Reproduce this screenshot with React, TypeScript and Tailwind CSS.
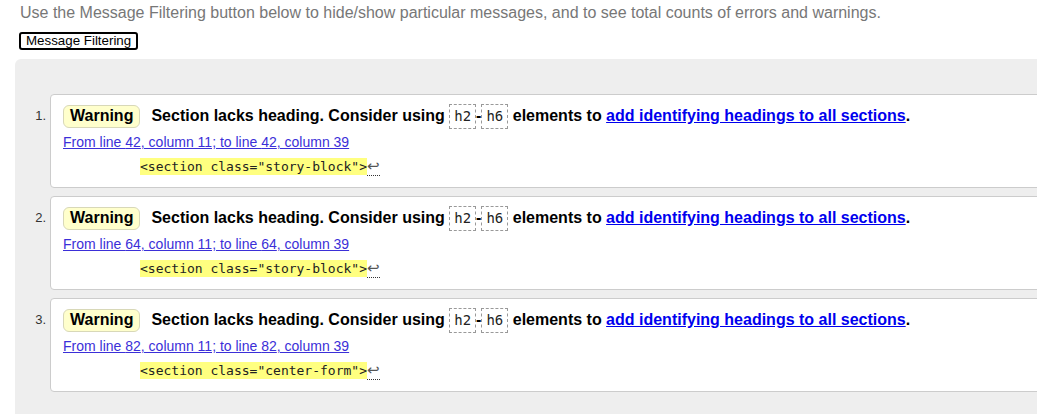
import React from "react";

const items = [
  { n: 1, line: 42, cls: "story-block" },
  { n: 2, line: 64, cls: "story-block" },
  { n: 3, line: 82, cls: "center-form" },
];

const mono = { fontFamily: '"DejaVu Sans Mono", "Liberation Mono", monospace' };

function CodeBox({ children }: { children: React.ReactNode }) {
  return (
    <span
      className="inline-flex items-center h-[25px] px-[4px] border border-dashed border-[#999] text-[14px] font-normal text-[#222]"
      style={mono}
    >
      {children}
    </span>
  );
}

export default function App() {
  return (
    <div
      className="w-[1037px] h-[414px] overflow-hidden bg-white"
      style={{ fontFamily: '"Liberation Sans", Arial, sans-serif' }}
    >
      <p className="pl-[20px] pt-[4px] text-[16px] leading-[18px] text-[#777]">
        Use the Message Filtering button below to hide/show particular messages, and to see total counts of errors and warnings.
      </p>
      <button className="block ml-[19px] mt-[10px] h-[18px] px-[5px] border-2 border-black rounded-[3px] bg-white text-[13.33px] leading-[14px] text-black">
        Message Filtering
      </button>
      <div className="ml-[15px] mt-[9px] w-[1100px] h-[400px] bg-[#eeeeee] rounded-tl-[6px] pt-[35px]">
        <ol className="flex flex-col gap-[8px]">
          {items.map((it) => (
            <li key={it.n} className="flex">
              <span className="w-[35px] pr-[4px] pt-[13px] text-right text-[13px] leading-[18px] text-[#333]">
                {it.n}.
              </span>
              <div className="w-[1000px] h-[94px] bg-white border border-[#ccc] rounded-[4px] pl-[12px] pt-[8px]">
                <div className="flex items-center h-[26px] text-[16px] font-bold text-black whitespace-nowrap">
                  <span className="inline-flex items-center h-[23px] px-[6px] bg-[#ffffcc] border border-[#d8d8b8] rounded-[6px]">
                    Warning
                  </span>
                  <span className="ml-[11px]">Section lacks heading. Consider using&nbsp;</span>
                  <CodeBox>h2</CodeBox>
                  <span className="px-[0px]">-</span>
                  <CodeBox>h6</CodeBox>
                  <span>&nbsp;elements to&nbsp;</span>
                  <a href="#" className="text-[#0000ee] underline">
                    add identifying headings to all sections
                  </a>
                  <span>.</span>
                </div>
                <div className="mt-[4px] text-[14px] leading-[18px]">
                  <a href="#" className="text-[#3b2fd8] underline">
                    From line {it.line}, column 11; to line {it.line}, column 39
                  </a>
                </div>
                <div className="mt-[7px] ml-[77px] flex items-start text-[13px] leading-[17px] text-[#222]">
                  <span className="bg-[#ffff80] whitespace-pre" style={mono}>
                    {`<section class="${it.cls}">`}
                  </span>
                  <span
                    className="border-b border-dotted border-[#333] text-[15px] leading-[17px] text-[#555]"
                    style={{ fontFamily: '"DejaVu Sans", sans-serif' }}
                  >
                    ↩
                  </span>
                </div>
              </div>
            </li>
          ))}
        </ol>
      </div>
    </div>
  );
}
